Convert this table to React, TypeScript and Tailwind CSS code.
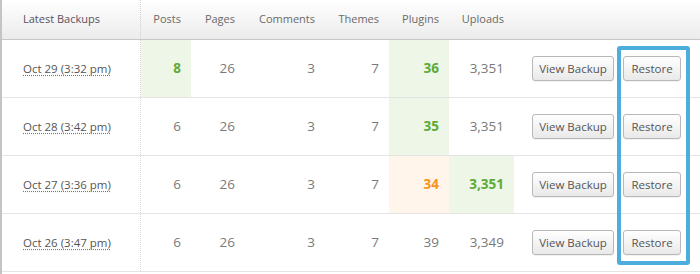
import React from "react";

type Cell = { v: string; tone?: "green" | "orange" };
type Row = { date: string; cells: Cell[] };

const rows: Row[] = [
  {
    date: "Oct 29 (3:32 pm)",
    cells: [{ v: "8", tone: "green" }, { v: "26" }, { v: "3" }, { v: "7" }, { v: "36", tone: "green" }, { v: "3,351" }],
  },
  {
    date: "Oct 28 (3:42 pm)",
    cells: [{ v: "6" }, { v: "26" }, { v: "3" }, { v: "7" }, { v: "35", tone: "green" }, { v: "3,351" }],
  },
  {
    date: "Oct 27 (3:36 pm)",
    cells: [{ v: "6" }, { v: "26" }, { v: "3" }, { v: "7" }, { v: "34", tone: "orange" }, { v: "3,351", tone: "green" }],
  },
  {
    date: "Oct 26 (3:47 pm)",
    cells: [{ v: "6" }, { v: "26" }, { v: "3" }, { v: "7" }, { v: "39" }, { v: "3,349" }],
  },
];

const headers = ["Posts", "Pages", "Comments", "Themes", "Plugins", "Uploads"];
const gridCols = "grid grid-cols-[139px_50px_54px_80px_64px_60px_65px_1fr]";

function toneClass(t?: "green" | "orange") {
  if (t === "green") return "bg-[#edf6e7] text-[#5dab37] font-bold";
  if (t === "orange") return "bg-[#fff5ea] text-[#f7941d] font-bold";
  return "text-[#7a7a7a]";
}

function Btn({ label, w }: { label: string; w: string }) {
  return (
    <button
      className={`${w} h-[25px] px-0 rounded-[3px] border border-[#b8b8b8] bg-gradient-to-b from-white to-[#e9e9e9] text-[11.5px] text-[#555] shadow-[0_1px_0_rgba(0,0,0,0.05)] leading-none text-center`}
    >
      {label}
    </button>
  );
}

export default function App() {
  return (
    <div
      className="relative w-[700px] h-[274px] bg-white overflow-hidden border-l-2 border-[#c4c4c4]"
      style={{ fontFamily: '"Open Sans", "Noto Sans", sans-serif' }}
    >
      <div className={`${gridCols} h-[40px] bg-gradient-to-b from-[#ffffff] to-[#ebebeb] border-b border-[#c8c8c8] text-[11px]`}>
        <div className="flex items-center pl-[21px] text-[#5a4f5c] border-r border-dotted border-[#d0d0d0]">Latest Backups</div>
        {headers.map((h) => (
          <div key={h} className="flex items-center justify-end pr-[10px] text-[#6a6a6a]">
            {h}
          </div>
        ))}
        <div />
      </div>
      {rows.map((r) => (
        <div key={r.date} className={`${gridCols} h-[58px] border-b border-[#e4e4e4]`}>
          <div className="flex items-center pl-[21px] border-r border-dotted border-[#d8d8d8]">
            <span className="text-[11.5px] text-[#555] underline decoration-dotted decoration-[#777] underline-offset-2">
              {r.date}
            </span>
          </div>
          {r.cells.map((c, i) => (
            <div key={i} className={`flex items-center justify-end pr-[10px] text-[13.5px] ${toneClass(c.tone)}`}>
              {c.v}
            </div>
          ))}
          <div className="flex items-center pl-[18px] gap-[9px]">
            <Btn label="View Backup" w="w-[82px]" />
            <Btn label="Restore" w="w-[58px]" />
          </div>
        </div>
      ))}
      <div className="absolute left-[615px] top-[46px] w-[73px] h-[219px] border-4 border-[#4eaddd] rounded-[3px]" />
    </div>
  );
}
